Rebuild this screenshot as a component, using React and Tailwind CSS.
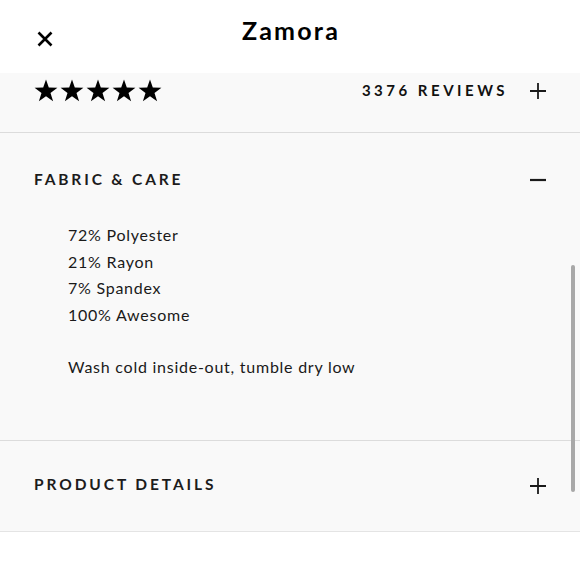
import React from "react";

const Star = () => (
  <svg width="24" height="23" viewBox="0 0 24 23" className="block">
    <path d="M12 0.5 L14.8 8.6 L23.4 8.7 L16.5 13.9 L19.1 22.2 L12 17.2 L4.9 22.2 L7.5 13.9 L0.6 8.7 L9.2 8.6 Z" fill="#000" />
  </svg>
);

const Plus = () => (
  <svg width="16" height="16" viewBox="0 0 16 16" className="block">
    <path d="M8 0 V16 M0 8 H16" stroke="#1a1a1a" strokeWidth="1.8" />
  </svg>
);

const Minus = () => (
  <svg width="16" height="16" viewBox="0 0 16 16" className="block">
    <path d="M0 8 H16" stroke="#1a1a1a" strokeWidth="2.2" />
  </svg>
);

export default function App() {
  return (
    <div className="relative w-[580px] h-[580px] bg-white overflow-hidden text-[#111]" style={{ fontFamily: "Lato, 'Noto Sans', sans-serif" }}>
      {/* Header */}
      <div className="h-[73px] bg-white relative flex items-start justify-center">
        <div className="absolute left-[37px] top-[31px]">
          <svg width="16" height="16" viewBox="0 0 16 16" className="block">
            <path d="M1.5 1.5 L14.5 14.5 M14.5 1.5 L1.5 14.5" stroke="#000" strokeWidth="2.6" />
          </svg>
        </div>
        <div className="pt-[13px] text-[25px] font-bold leading-[34px] tracking-[2.2px] text-black pl-[2px]">Zamora</div>
      </div>

      <div className="bg-[#f9f9f9]">
        {/* Reviews row */}
        <div className="h-[60px] border-b border-[#dcdcdc] flex items-start pt-[6px] px-[34px]">
          <div className="flex gap-[2px]">
            <Star /><Star /><Star /><Star /><Star />
          </div>
          <div className="ml-auto flex items-center gap-[22px] h-[23px]">
            <span className="text-[15px] font-bold tracking-[3.5px] leading-none">3376 REVIEWS</span>
            <Plus />
          </div>
        </div>

        {/* Fabric & care */}
        <div className="h-[308px] border-b border-[#dcdcdc] px-[34px] pt-[37px]">
          <div className="flex items-center justify-between h-[20px]">
            <span className="text-[15.5px] font-bold tracking-[2.85px] leading-none text-[#1c1c1c]">FABRIC &amp; CARE</span>
            <Minus />
          </div>
          <div className="pl-[34px] pt-[32px] text-[16px] leading-[26.5px] tracking-[0.75px] text-[#1a1a1a]">
            <div>72% Polyester</div>
            <div>21% Rayon</div>
            <div>7% Spandex</div>
            <div>100% Awesome</div>
            <div className="pt-[25.5px]">Wash cold inside-out, tumble dry low</div>
          </div>
        </div>

        {/* Product details */}
        <div className="h-[91px] border-b border-[#e4e4e4] px-[34px] flex items-center justify-between">
          <span className="text-[15.5px] font-bold tracking-[2.9px] leading-none text-[#1c1c1c] -mt-[2px]">PRODUCT DETAILS</span>
          <Plus />
        </div>
      </div>

      {/* scrollbar */}
      <div className="absolute left-[571px] top-[265px] w-[4px] h-[227px] rounded-full bg-[#a8a8a8]" />
    </div>
  );
}
